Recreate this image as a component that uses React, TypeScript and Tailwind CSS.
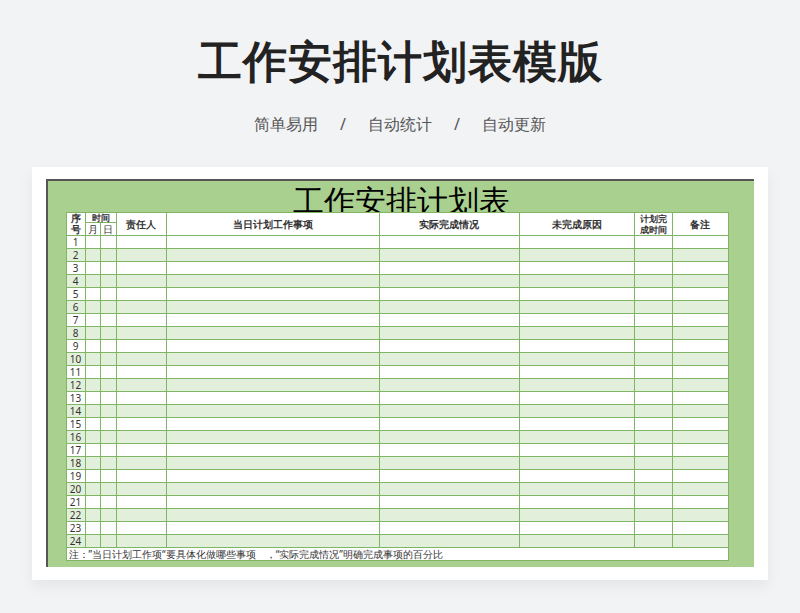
const rows = Array.from({ length: 24 }, (_, i) => i + 1);
const cols = ["w-[19px]", "w-[15px]", "w-[16px]", "w-[50px]", "w-[213px]", "w-[140px]", "w-[115px]", "w-[38px]", "w-[56px]"];

export default function App() {
  const cell = "border border-[#7fb565] p-0";
  return (
    <div className="w-[800px] h-[613px] bg-[#f2f3f5] flex flex-col items-center font-['Noto_Sans_CJK_SC',sans-serif]">
      <h1 className="mt-[30px] text-[44px] leading-[60px] font-bold text-[#222] tracking-[1px]">工作安排计划表模版</h1>
      <div className="mt-[22px] flex gap-[22px] text-[16px] leading-[24px] text-[#555]">
        <span>简单易用</span><span>/</span><span>自动统计</span><span>/</span><span>自动更新</span>
      </div>
      <div className="mt-[31px] w-[736px] h-[413px] bg-white shadow-[0_6px_14px_rgba(0,0,0,0.06)] pt-[12px] pl-[14px]">
        <div className="w-[708px] h-[388px] bg-[#a9d08e] border-l-2 border-t-2 border-[#555] flex flex-col items-center">
          <div className="h-[31px] text-[31px] leading-[38px] text-black font-['Noto_Serif_CJK_SC','Noto_Sans_CJK_SC',serif]">工作安排计划表</div>
          <table className="ml-[-8px] border-collapse table-fixed text-[10px] text-[#333] font-['Noto_Serif_CJK_SC','Liberation_Serif',serif]">
            <colgroup>{cols.map((c, i) => <col key={i} className={c} />)}</colgroup>
            <tbody>
              <tr className="h-[10px] bg-white">
                <td rowSpan={2} className={`${cell} text-center leading-[11px] font-bold`}>序<br />号</td>
                <td colSpan={2} className={`${cell} text-center text-[9px] leading-[9px] font-bold`}>时间</td>
                <td rowSpan={2} className={`${cell} text-center font-bold`}>责任人</td>
                <td rowSpan={2} className={`${cell} text-center font-bold`}>当日计划工作事项</td>
                <td rowSpan={2} className={`${cell} text-center font-bold`}>实际完成情况</td>
                <td rowSpan={2} className={`${cell} text-center font-bold`}>未完成原因</td>
                <td rowSpan={2} className={`${cell} text-center text-[9px] leading-[11px] font-bold`}>计划完<br />成时间</td>
                <td rowSpan={2} className={`${cell} text-center font-bold`}>备注</td>
              </tr>
              <tr className="h-[13px] bg-white">
                <td className={`${cell} text-center leading-[12px]`}>月</td>
                <td className={`${cell} text-center leading-[12px]`}>日</td>
              </tr>
              {rows.map((r) => (
                <tr key={r} className={`h-[13px] ${r % 2 === 0 ? "bg-[#e2efda]" : "bg-white"}`}>
                  <td className={`${cell} text-center leading-[12px]`}>{r}</td>
                  {cols.slice(1).map((_, i) => <td key={i} className={cell} />)}
                </tr>
              ))}
              <tr className="h-[13px] bg-white">
                <td colSpan={9} className={`${cell} pl-[2px] leading-[12px]`}>注：”当日计划工作项“要具体化做哪些事项　，“实际完成情况”明确完成事项的百分比</td>
              </tr>
            </tbody>
          </table>
        </div>
      </div>
    </div>
  );
}
